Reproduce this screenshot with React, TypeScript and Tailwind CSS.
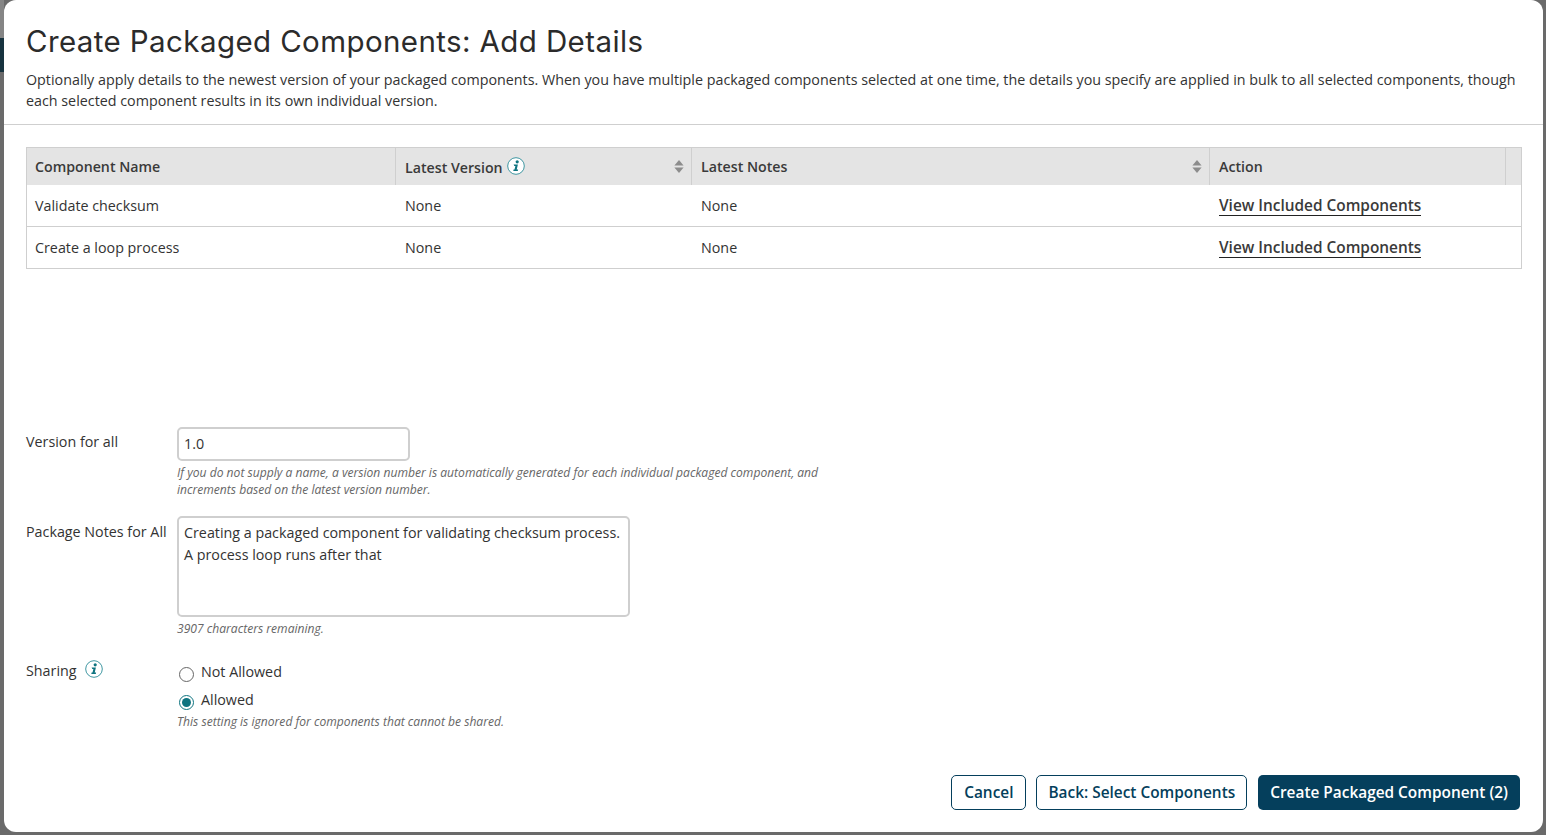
function InfoIcon() {
  return (
    <svg width="18" height="18" viewBox="0 0 18 18" className="shrink-0">
      <circle cx="9" cy="9" r="8.3" fill="#fff" stroke="#3f97a2" strokeWidth="1" />
      <circle cx="10.2" cy="4.8" r="1.6" fill="#0f7480" />
      <path d="M6.6 7.6h4.3l-1.2 5h1.4l-.3 1.3H6.3l.3-1.3h.9l.9-3.7h-1.100z" fill="#0f7480" />
    </svg>
  );
}

function SortIcon() {
  return (
    <svg width="10" height="13" viewBox="0 0 10 13" className="shrink-0">
      <path d="M5 0l4.600 5.500H.4z" fill="#8c8c8c" />
      <path d="M5 13L.4 7.500h9.200z" fill="#8c8c8c" />
    </svg>
  );
}

const rows = ['Validate checksum', 'Create a loop process'];

export default function App() {
  return (
    <div className="relative h-[835px] overflow-hidden bg-[#6a6a6a] pl-[4px] pr-[3px] pb-[3px] font-['Open_Sans',sans-serif] text-[14.3px] text-[#333]">
      {/* page peeking out behind the modal */}
      <div className="absolute top-0 left-0 h-[38px] w-[4px] bg-[#858585]" />
      <div className="absolute top-[38px] left-0 h-[34px] w-[4px] bg-[#17333f]" />
      <div className="relative flex h-[832px] flex-col rounded-xl bg-white">
        {/* Header */}
        <div className="h-[125px] border-b border-[#cfcfcf] pl-[22px] pr-[24px] pt-[22px]">
          <h1 className="font-['Inter',sans-serif] text-[29.5px] leading-[38px] font-normal tracking-[0.4px] text-[#2b2b2b]">
            Create Packaged Components: Add Details
          </h1>
          <p className="mt-[9px] leading-[21px] text-[#333]">
            Optionally apply details to the newest version of your packaged components. When you have multiple packaged components selected at one time, the details you specify are applied in bulk to all selected components, though each selected component results in its own individual version.
          </p>
        </div>

        {/* Table */}
        <div className="mt-[22px] ml-[22px] mr-[21px] border border-[#cfcfcf]">
          <div className="flex h-[37px] items-center bg-[#e4e4e4] text-[14.2px] font-semibold text-[#3a3a3a]">
            <div className="flex h-full w-[369px] items-center border-r border-[#cfcfcf] pl-[8px]">Component Name</div>
            <div className="flex h-full w-[296px] items-center border-r border-[#cfcfcf] pl-[9px] pr-[7px]">
              <span className="mt-[2px]">Latest Version</span>
              <span className="ml-[4px] mb-[2px]"><InfoIcon /></span>
              <span className="ml-auto"><SortIcon /></span>
            </div>
            <div className="flex h-full w-[518px] items-center border-r border-[#cfcfcf] pl-[9px] pr-[7px]">
              <span>Latest Notes</span>
              <span className="ml-auto"><SortIcon /></span>
            </div>
            <div className="flex h-full w-[296px] items-center border-r border-[#cfcfcf] pl-[9px]">Action</div>
          </div>
          {rows.map((name, i) => (
            <div key={name} className={`flex items-center ${i === 0 ? 'h-[42px] border-b border-[#cfcfcf]' : 'h-[41px]'}`}>
              <div className="w-[369px] pl-[8px]">{name}</div>
              <div className="w-[296px] pl-[9px]">None</div>
              <div className="w-[518px] pl-[9px]">None</div>
              <a className="ml-[9px] border-b border-[#222] pt-[2px] text-[15.4px] leading-[18px] font-semibold text-[#3a3a3a]">View Included Components</a>
            </div>
          ))}
        </div>

        {/* Form */}
        <div className="mt-[158px] flex pl-[22px]">
          <label className="w-[151px] pt-[4px]">Version for all</label>
          <div>
            <input
              readOnly
              value="1.0"
              className="h-[34px] w-[233px] rounded-[5px] border-2 border-[#cfcfcf] px-[5px] pb-[2px] text-[14.3px] text-[#333] outline-none"
            />
            <p className="mt-[3px] w-[680px] text-[12.1px] leading-[17px] text-[#666] italic">
              If you do not supply a name, a version number is automatically generated for each individual packaged component, and increments based on the latest version number.
            </p>
          </div>
        </div>

        <div className="mt-[18px] flex pl-[22px]">
          <label className="w-[151px] pt-[5px]">Package Notes for All</label>
          <div>
            <textarea
              readOnly
              value={'Creating a packaged component for validating checksum process.\nA process loop runs after that'}
              className="block h-[101px] w-[453px] resize-none rounded-[5px] border-2 border-[#cfcfcf] px-[5px] py-[4px] text-[14.3px] leading-[22px] text-[#333] outline-none"
            />
            <p className="mt-[3px] text-[12.1px] leading-[17px] text-[#666] italic">3907 characters remaining.</p>
          </div>
        </div>

        <div className="mt-[21px] flex pl-[22px]">
          <div className="flex w-[151px] items-start gap-[8px]">
            <span className="mt-[2px]">Sharing</span>
            <span className="mt-[2px]"><InfoIcon /></span>
          </div>
          <div>
            <div className="flex h-[28px] items-center gap-[7px]">
              <span className="mt-[4px] ml-[2px] h-[15px] w-[15px] rounded-full border border-[#666] bg-white" />
              <span>Not Allowed</span>
            </div>
            <div className="flex h-[28px] items-center gap-[7px]">
              <span className="mt-[4px] ml-[2px] flex h-[15px] w-[15px] items-center justify-center rounded-full border border-[#0f7480] bg-white">
                <span className="h-[9px] w-[9px] rounded-full bg-[#0f7480]" />
              </span>
              <span>Allowed</span>
            </div>
            <p className="mt-[-1px] text-[12.1px] leading-[17px] text-[#666] italic">This setting is ignored for components that cannot be shared.</p>
          </div>
        </div>

        {/* Footer */}
        <div className="mt-auto mb-[22px] flex justify-end gap-[11px] pr-[23px]">
          <button className="mr-[-1px] h-[35px] rounded-[5px] border border-[#053f5c] bg-white px-[12px] text-[15.4px] font-semibold text-[#053f5c]">Cancel</button>
          <button className="h-[35px] rounded-[5px] border border-[#053f5c] bg-white px-[11px] text-[15.4px] font-semibold text-[#053f5c]">Back: Select Components</button>
          <button className="h-[35px] rounded-[5px] bg-[#053f5c] px-[12px] text-[15.4px] font-semibold text-white">Create Packaged Component (2)</button>
        </div>
      </div>
    </div>
  );
}
